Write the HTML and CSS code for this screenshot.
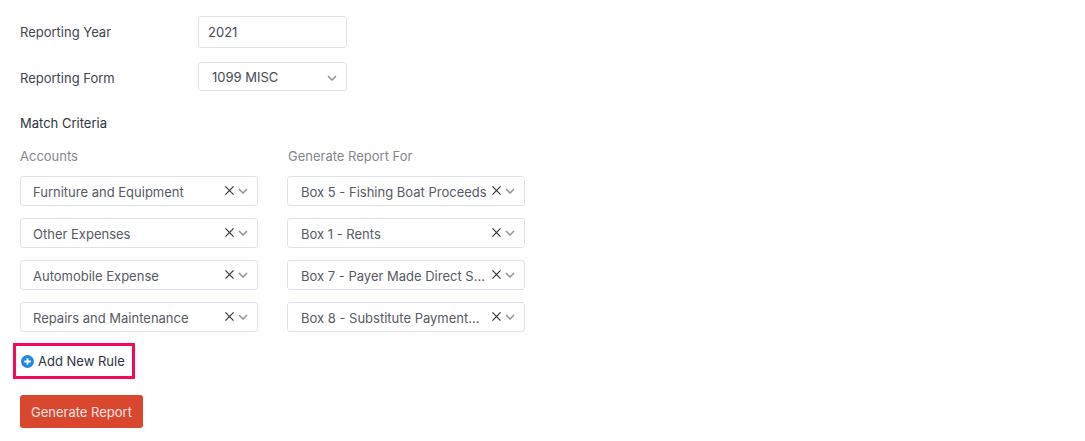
FILE: index.html
```html
<!DOCTYPE html>
<html lang="en">
<head>
<meta charset="utf-8">
<title>Reports</title>
<link rel="stylesheet" href="styles.css">
</head>
<body>
<main class="page">
  <div class="field field-year">
    <label class="field-label">Reporting Year</label>
    <div class="input">2021</div>
  </div>
  <div class="field field-form">
    <label class="field-label label-form">Reporting Form</label>
    <div class="input input-select">
      <span>1099 MISC</span>
      <svg class="chev" viewBox="0 0 10 6"><path d="M1 1l4 4 4-4"/></svg>
    </div>
  </div>
  <h2 class="section-title">Match Criteria</h2>
  <div class="rules">
    <div class="col-head">Accounts</div>
    <div class="col-head col-head-b">Generate Report For</div>

    <div class="select"><span class="value">Furniture and Equipment</span><svg class="x" viewBox="0 0 10 10"><path d="M.5.5l9 9M9.5.5l-9 9"/></svg><svg class="chev" viewBox="0 0 10 6"><path d="M1 1l4 4 4-4"/></svg></div>
    <div class="select select-b"><span class="value">Box 5 - Fishing Boat Proceeds</span><svg class="x" viewBox="0 0 10 10"><path d="M.5.5l9 9M9.5.5l-9 9"/></svg><svg class="chev" viewBox="0 0 10 6"><path d="M1 1l4 4 4-4"/></svg></div>

    <div class="select"><span class="value">Other Expenses</span><svg class="x" viewBox="0 0 10 10"><path d="M.5.5l9 9M9.5.5l-9 9"/></svg><svg class="chev" viewBox="0 0 10 6"><path d="M1 1l4 4 4-4"/></svg></div>
    <div class="select select-b"><span class="value">Box 1 - Rents</span><svg class="x" viewBox="0 0 10 10"><path d="M.5.5l9 9M9.5.5l-9 9"/></svg><svg class="chev" viewBox="0 0 10 6"><path d="M1 1l4 4 4-4"/></svg></div>

    <div class="select"><span class="value">Automobile Expense</span><svg class="x" viewBox="0 0 10 10"><path d="M.5.5l9 9M9.5.5l-9 9"/></svg><svg class="chev" viewBox="0 0 10 6"><path d="M1 1l4 4 4-4"/></svg></div>
    <div class="select select-b"><span class="value">Box 7 - Payer Made Direct Sales of $5,000</span><svg class="x" viewBox="0 0 10 10"><path d="M.5.5l9 9M9.5.5l-9 9"/></svg><svg class="chev" viewBox="0 0 10 6"><path d="M1 1l4 4 4-4"/></svg></div>

    <div class="select"><span class="value">Repairs and Maintenance</span><svg class="x" viewBox="0 0 10 10"><path d="M.5.5l9 9M9.5.5l-9 9"/></svg><svg class="chev" viewBox="0 0 10 6"><path d="M1 1l4 4 4-4"/></svg></div>
    <div class="select select-b"><span class="value value-tight">Box 8 - Substitute Payments in Lieu</span><svg class="x" viewBox="0 0 10 10"><path d="M.5.5l9 9M9.5.5l-9 9"/></svg><svg class="chev" viewBox="0 0 10 6"><path d="M1 1l4 4 4-4"/></svg></div>
  </div>
  <div class="add-rule">
    <svg class="plus" viewBox="0 0 14 14"><circle cx="7" cy="7" r="7"/><path d="M7 3.4v7.2M3.4 7h7.2"/></svg>
    <span>Add New Rule</span>
  </div>
  <button class="btn-primary" type="button">Generate Report</button>
</main>
</body>
</html>
```
FILE: styles.css
```css
* { box-sizing: border-box; }
html, body { margin: 0; background: #fff; }
body {
  font-family: Inter, "Liberation Sans", sans-serif;
  font-size: 13px;
  color: #3f4550;
  height: 441px;
  overflow: hidden;
}
.page { padding: 16px 0 0 20px; display: flex; flex-direction: column; align-items: flex-start; }
.field { display: flex; align-items: center; }
.field-form { margin-top: 14px; }
.field-label { width: 178px; color: #404550; }
.label-form { padding-top: 2px; }
.input {
  width: 149px;
  height: 32px;
  border: 1px solid #dfe2ea;
  border-radius: 3px;
  padding: 0 9px;
  display: flex;
  align-items: center;
  color: #444a55;
}
.input-select { height: 29px; padding: 0 9px 0 13px; justify-content: space-between; }
.input-select .chev { margin-top: 2px; }
.section-title { margin: 24px 0 0; font: inherit; line-height: 16px; color: #30353f; }
.rules {
  display: grid;
  grid-template-columns: 238px 238px;
  grid-template-rows: 16px repeat(4, 30px);
  column-gap: 29px;
  row-gap: 12px;
  margin-top: 17px;
}
.col-head { color: #83868d; line-height: 16px; }
.col-head-b { margin-left: 1px; }
.select {
  display: flex;
  align-items: center;
  border: 1px solid #dfe2ea;
  border-radius: 3px;
  padding: 0 9px 0 12px;
  min-width: 0;
}
.select-b { padding-left: 13px; }
.value { flex: 1; min-width: 0; padding-top: 2px; white-space: nowrap; overflow: hidden; text-overflow: ellipsis; color: #555a64; margin-right: 5px; }
.value-tight { margin-right: 10px; }
.x { width: 9px; height: 9px; flex: none; margin: -1px 4px 0 0; fill: none; stroke: #30343c; stroke-width: 1.3; }
.chev { width: 10px; height: 6px; flex: none; fill: none; stroke: #8f9299; stroke-width: 1.5; }
.add-rule {
  display: flex;
  align-items: center;
  gap: 4px;
  margin: 11px 0 0 -7px;
  height: 36px;
  width: 122px;
  padding-left: 5px;
  border: 3px solid #f5095f;
  color: #2d323c;
}
.plus { width: 13px; height: 13px; flex: none; }
.plus circle { fill: #1f8ae0; }
.plus path { stroke: #fff; stroke-width: 2; fill: none; }
.btn-primary {
  margin-top: 16px;
  width: 123px;
  height: 33px;
  border: 0;
  border-radius: 3px;
  background: #d9472f;
  color: #fbe6e2;
  font: inherit;
  padding: 0;
}
```
